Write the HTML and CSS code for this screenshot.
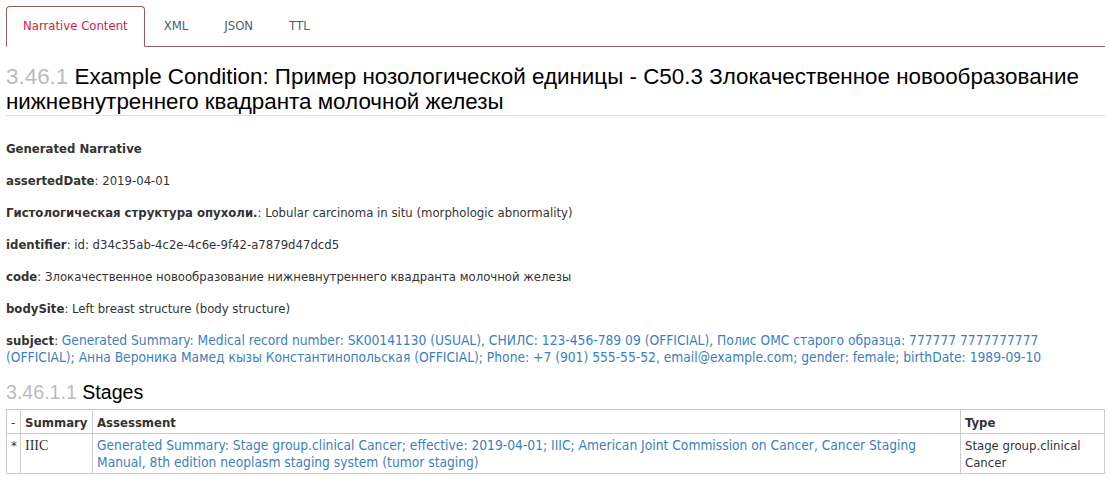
FILE: index.html
```html
<!DOCTYPE html>
<html lang="en">
<head>
<meta charset="utf-8">
<title>Example Condition</title>
<link rel="stylesheet" href="styles.css">
</head>
<body>
<div class="page">
  <ul class="tabs">
    <li class="tab active"><a href="#">Narrative Content</a></li>
    <li class="tab"><a href="#">XML</a></li>
    <li class="tab"><a href="#">JSON</a></li>
    <li class="tab"><a href="#">TTL</a></li>
  </ul>

  <h2 class="title"><span class="num">3.46.1</span> Example Condition: Пример нозологической единицы - C50.3 Злокачественное новообразование нижневнутреннего квадранта молочной железы</h2>

  <div class="narrative">
    <p><b>Generated Narrative</b></p>
    <p><b>assertedDate</b>: 2019-04-01</p>
    <p><b>Гистологическая структура опухоли.</b>: Lobular carcinoma in situ (morphologic abnormality)</p>
    <p><b>identifier</b>: id: d34c35ab-4c2e-4c6e-9f42-a7879d47dcd5</p>
    <p><b>code</b>: Злокачественное новообразование нижневнутреннего квадранта молочной железы</p>
    <p><b>bodySite</b>: Left breast structure (body structure)</p>
    <p><b>subject</b>: <a class="wide" href="#">Generated Summary: Medical record number: SK00141130 (USUAL), СНИЛС: 123-456-789 09 (OFFICIAL), Полис ОМС старого образца: 777777 7777777777 (OFFICIAL); Анна Вероника Мамед кызы Константинопольская (OFFICIAL); Phone: +7 (901) 555-55-52, email@example.com; gender: female; birthDate: 1989-09-10</a></p>
  </div>

  <h3 class="sub"><span class="num">3.46.1.1</span> Stages</h3>

  <table class="grid">
    <tr class="head">
      <td class="c-dash">-</td>
      <td class="c-sum"><b>Summary</b></td>
      <td class="c-ass"><b>Assessment</b></td>
      <td class="c-type"><b>Type</b></td>
    </tr>
    <tr class="row">
      <td class="c-dash">*</td>
      <td class="c-sum serif">IIIC</td>
      <td class="c-ass"><a class="wide2" href="#">Generated Summary: Stage group.clinical Cancer; effective: 2019-04-01; IIIC; American Joint Commission on Cancer, Cancer Staging Manual, 8th edition neoplasm staging system (tumor staging)</a></td>
      <td class="c-type">Stage group.clinical Cancer</td>
    </tr>
  </table>
</div>
</body>
</html>
```

FILE: styles.css
```css
html, body {
  margin: 0;
  padding: 0;
  background: #fff;
}

.page {
  padding: 6px 5px 4px 6px;
  font-family: "DejaVu Sans Condensed", "DejaVu Sans", sans-serif;
  font-size: 13px;
  color: #333;
}

a {
  color: #3c7fc0;
  text-decoration: none;
}

.wide {
  font-size: 13.7px;
  line-height: 17px;
}

.wide2 {
  font-size: 13.7px;
  line-height: 17px;
}

.tabs {
  display: flex;
  list-style: none;
  margin: 0;
  padding: 0;
  border-bottom: 1px solid #9a5a5e;
}

.tab {
  margin-bottom: -1px;
  margin-right: 2px;
}

.tab a {
  display: block;
  padding: 9px 16px 10px;
  line-height: 20px;
  color: #4e5d6c;
  border: 1px solid transparent;
  border-radius: 4px 4px 0 0;
}

.tab.active a {
  color: #d21b45;
  background: #fff;
  border-color: #9a5a5e;
  border-bottom-color: #fff;
}

.title {
  margin: 17px 0 24px;
  padding-bottom: 1px;
  font-family: "Liberation Sans", Arial, sans-serif;
  font-weight: normal;
  font-size: 22.4px;
  line-height: 25px;
  color: #000;
  border-bottom: 1px solid #ddd;
}

.num {
  color: #bbb;
}

.narrative p {
  margin: 0 0 15px;
  line-height: 17px;
}

.sub {
  margin: -1px 0 4px;
  font-family: "Liberation Sans", Arial, sans-serif;
  font-weight: normal;
  font-size: 19.6px;
  line-height: 25px;
  color: #000;
}

.grid {
  width: 100%;
  border-collapse: collapse;
  border: 1px solid #ccc;
}

.grid td {
  border: 1px solid #ccc;
  padding: 3px 3px 3px 4px;
  line-height: 17px;
  vertical-align: top;
  text-align: left;
}

.head td {
  padding: 4px 3px 2px 4px;
}

.row td {
  padding: 3px 3px 2px 4px;
}

.c-dash {
  width: 6px;
}

.c-sum {
  width: 64px;
}

.c-type {
  width: 136px;
}

.serif {
  font-family: "Liberation Serif", "Times New Roman", serif;
  font-size: 14px;
}
```
